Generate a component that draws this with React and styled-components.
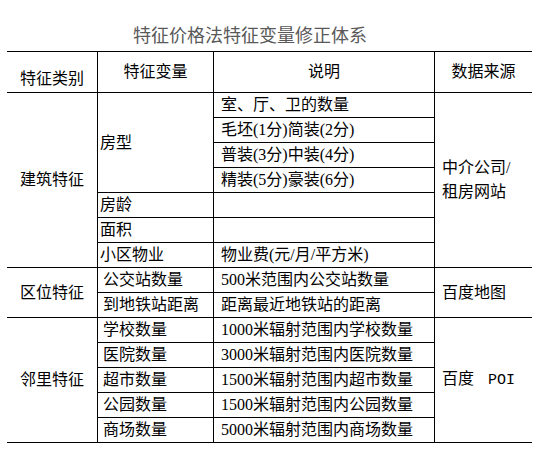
import React from 'react';
import styled, { createGlobalStyle } from 'styled-components';

const Global = createGlobalStyle`
  html, body { margin: 0; padding: 0; background: #fff; }
  body {
    font-family: "Liberation Serif", "Noto Sans CJK SC", serif;
    color: #000;
  }
  * { box-sizing: border-box; }
`;

const Page = styled.div`
  width: 550px;
  height: 459px;
  overflow: hidden;
  padding-top: 22px;
`;

const Title = styled.h1`
  margin: 0 0 5px 133px;
  font-family: "Noto Sans CJK SC", sans-serif;
  font-weight: 400;
  font-size: 18px;
  line-height: 24px;
  color: #595959;
`;

const Grid = styled.div`
  margin-left: 7px;
  width: 525px;
  display: grid;
  grid-template-columns: 90px 116px 221px 98px;
  grid-template-rows: 41px repeat(14, 25px);
  border-top: 1px solid #000;
  font-size: 16px;
  line-height: 24px;
`;

const Cell = styled.div`
  grid-column: ${(p) => p.$col};
  grid-row: ${(p) => p.$row};
  border-bottom: 1px solid #000;
  border-left: ${(p) => (p.$col > 1 ? '1px solid #000' : 'none')};
  display: flex;
  align-items: center;
  justify-content: ${(p) => (p.$center ? 'center' : 'flex-start')};
  padding-left: ${(p) => p.$pad || 0}px;
  padding-top: ${(p) => p.$top || 0}px;
  white-space: nowrap;
`;

const Lines = styled.span`
  display: block;
`;

const Poi = styled.span`
  margin-left: 14px;
  font-family: "Liberation Mono", monospace;
  font-size: 15px;
`;

const headers = [
  { t: '特征类别', top: 14 },
  { t: '特征变量' },
  { t: '说明' },
  { t: '数据来源' },
];

const groups = [
  { t: '建筑特征', row: '2 / 9' },
  { t: '区位特征', row: '9 / 11' },
  { t: '邻里特征', row: '11 / 16' },
];

const vars = [
  { t: '房型', row: '2 / 6', pad: 2 },
  { t: '房龄', row: '6', pad: 2 },
  { t: '面积', row: '7', pad: 2 },
  { t: '小区物业', row: '8', pad: 2 },
  { t: '公交站数量', row: '9', pad: 5 },
  { t: '到地铁站距离', row: '10', pad: 5 },
  { t: '学校数量', row: '11', pad: 5 },
  { t: '医院数量', row: '12', pad: 5 },
  { t: '超市数量', row: '13', pad: 5 },
  { t: '公园数量', row: '14', pad: 5 },
  { t: '商场数量', row: '15', pad: 5 },
];

const notes = [
  '室、厅、卫的数量',
  '毛坯(1分)简装(2分)',
  '普装(3分)中装(4分)',
  '精装(5分)豪装(6分)',
  '',
  '',
  '物业费(元/月/平方米)',
  '500米范围内公交站数量',
  '距离最近地铁站的距离',
  '1000米辐射范围内学校数量',
  '3000米辐射范围内医院数量',
  '1500米辐射范围内超市数量',
  '1500米辐射范围内公园数量',
  '5000米辐射范围内商场数量',
];

export default function App() {
  return (
    <Page>
      <Global />
      <Title>特征价格法特征变量修正体系</Title>
      <Grid>
        {headers.map((h, i) => (
          <Cell key={h.t} $col={i + 1} $row="1" $center $top={h.top}>
            {h.t}
          </Cell>
        ))}
        {groups.map((g) => (
          <Cell key={g.t} $col={1} $row={g.row} $center>
            {g.t}
          </Cell>
        ))}
        {vars.map((v) => (
          <Cell key={v.t} $col={2} $row={v.row} $pad={v.pad}>
            {v.t}
          </Cell>
        ))}
        {notes.map((n, i) => (
          <Cell key={i} $col={3} $row={String(i + 2)} $pad={7}>
            {n}
          </Cell>
        ))}
        <Cell $col={4} $row="2 / 9" $pad={7}>
          <Lines>
            中介公司/
            <br />
            租房网站
          </Lines>
        </Cell>
        <Cell $col={4} $row="9 / 11" $pad={7}>
          百度地图
        </Cell>
        <Cell $col={4} $row="11 / 16" $pad={7}>
          <Lines>
            百度<Poi>POI</Poi>
          </Lines>
        </Cell>
      </Grid>
    </Page>
  );
}
